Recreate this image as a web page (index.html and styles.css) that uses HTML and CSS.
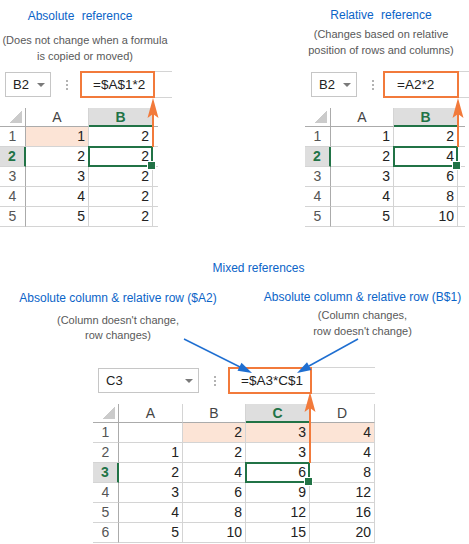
FILE: index.html
```html
<!DOCTYPE html>
<html lang="en">
<head>
    <meta charset="UTF-8">
    <title>Absolute, relative and mixed references</title>
    <link rel="stylesheet" href="styles.css">
</head>
<body>
<div class="page">
    <section class="top">
        <div class="panel panel-abs">
            <div class="caption">
                <h2 class="title">Absolute reference</h2>
                <p class="note">(Does not change when a formula<br>is copied or moved)</p>
            </div>
            <div class="sheet">
                <div class="bar">
                    <div class="namebox">B2<span class="caret"></span></div>
                    <div class="dots"></div>
                    <div class="fbar"><div class="formula">=$A$1*2</div></div>
                </div>
                <div class="grid grid-abs">
                    <div class="corner"></div><div class="ch">A</div><div class="ch sel-col">B</div><div class="ch x"></div>
                    <div class="rh">1</div><div class="c peach">1</div><div class="c">2</div><div class="x"></div>
                    <div class="rh sel-row">2</div><div class="c">2</div><div class="c active">2</div><div class="x"></div>
                    <div class="rh">3</div><div class="c">3</div><div class="c">2</div><div class="x"></div>
                    <div class="rh">4</div><div class="c">4</div><div class="c">2</div><div class="x"></div>
                    <div class="rh">5</div><div class="c">5</div><div class="c">2</div><div class="x"></div>
                </div>
            </div>
        </div>

        <div class="panel panel-rel">
            <div class="caption">
                <h2 class="title">Relative reference</h2>
                <p class="note">(Changes based on relative<br>position of rows and columns)</p>
            </div>
            <div class="sheet">
                <div class="bar">
                    <div class="namebox">B2<span class="caret"></span></div>
                    <div class="dots"></div>
                    <div class="fbar"><div class="formula">=A2*2</div></div>
                </div>
                <div class="grid grid-rel">
                    <div class="corner"></div><div class="ch">A</div><div class="ch sel-col">B</div><div class="ch x"></div>
                    <div class="rh">1</div><div class="c">1</div><div class="c">2</div><div class="x"></div>
                    <div class="rh sel-row">2</div><div class="c">2</div><div class="c active">4</div><div class="x"></div>
                    <div class="rh">3</div><div class="c">3</div><div class="c">6</div><div class="x"></div>
                    <div class="rh">4</div><div class="c">4</div><div class="c">8</div><div class="x"></div>
                    <div class="rh">5</div><div class="c">5</div><div class="c">10</div><div class="x"></div>
                </div>
            </div>
        </div>
    </section>

    <section class="mixed">
        <h2 class="title mixed-title">Mixed references</h2>
        <div class="mixed-notes">
            <div class="mcap mcap-left">
                <h3 class="title">Absolute column &amp; relative row ($A2)</h3>
                <p class="note">(Column doesn't change,<br>row changes)</p>
            </div>
            <div class="mcap mcap-right">
                <h3 class="title">Absolute column &amp; relative row (B$1)</h3>
                <p class="note">(Column changes,<br>row doesn't change)</p>
            </div>
        </div>
        <div class="sheet sheet-mixed">
            <div class="bar">
                <div class="namebox">C3<span class="caret"></span></div>
                <div class="dots"></div>
                <div class="fbar"><div class="formula">=$A3*C$1</div></div>
            </div>
            <div class="grid grid-mixed">
                <div class="corner"></div><div class="ch">A</div><div class="ch">B</div><div class="ch sel-col">C</div><div class="ch">D</div>
                <div class="rh">1</div><div class="c"></div><div class="c peach">2</div><div class="c peach">3</div><div class="c peach">4</div>
                <div class="rh">2</div><div class="c">1</div><div class="c">2</div><div class="c">3</div><div class="c">4</div>
                <div class="rh sel-row">3</div><div class="c">2</div><div class="c">4</div><div class="c active">6</div><div class="c">8</div>
                <div class="rh">4</div><div class="c">3</div><div class="c">6</div><div class="c">9</div><div class="c">12</div>
                <div class="rh">5</div><div class="c">4</div><div class="c">8</div><div class="c">12</div><div class="c">16</div>
                <div class="rh">6</div><div class="c">5</div><div class="c">10</div><div class="c">15</div><div class="c">20</div>
            </div>
        </div>
    </section>

    <!-- callout arrows drawn over the sheets -->
    <svg class="arrows" width="469" height="544" viewBox="0 0 469 544">
        <g stroke="#f27a3b" stroke-width="2">
            <line x1="153" y1="147" x2="153" y2="112"/>
            <line x1="458" y1="147" x2="458" y2="112"/>
            <line x1="310" y1="463" x2="310" y2="406"/>
        </g>
        <g fill="#f27a3b">
            <polygon points="153,98 158.5,118 153,114 147.5,118"/>
            <polygon points="458,98 463.5,118 458,114 452.5,118"/>
            <polygon points="310,392 315.5,412 310,408 304.5,412"/>
        </g>
        <g stroke="#1f6fd1" stroke-width="1.5">
            <line x1="184" y1="339" x2="240" y2="367"/>
            <line x1="358" y1="339" x2="309" y2="366"/>
        </g>
        <g fill="#1f6fd1">
            <polygon points="252,373 237.5,370.7 241.5,362.7"/>
            <polygon points="297,373 307,362.3 311.4,370.1"/>
        </g>
    </svg>
</div>
</body>
</html>
```

FILE: styles.css
```css
* {
    box-sizing: border-box;
}
body {
    margin: 0;
    font-family: "Liberation Sans", Arial, sans-serif;
    background: #fff;
}
.page {
    position: relative;
    width: 469px;
    height: 544px;
    overflow: hidden;
}

/* captions */
.title {
    margin: 0;
    font-size: 12px;
    font-weight: normal;
    line-height: 16px;
    color: #0b64c8;
    white-space: nowrap;
}
.note {
    margin: 0;
    font-size: 11px;
    line-height: 16px;
    color: #595959;
    white-space: nowrap;
}

/* top row: absolute + relative */
.top {
    display: flex;
    justify-content: space-between;
    height: 227px;
}
.panel-abs {
    width: 172px;
}
.panel-rel {
    width: 164px;
}
.caption {
    height: 71px;
    text-align: center;
}
.caption .title {
    word-spacing: 4px;
}
.panel-abs .caption {
    width: 170px;
    padding-top: 8px;
}
.panel-abs .title {
    padding-right: 10px;
}
.panel-abs .note {
    margin-top: 8px;
}
.panel-rel .caption {
    width: 152px;
    padding-top: 7px;
}
.panel-rel .note {
    margin-top: 3px;
}

/* formula bar */
.bar {
    display: flex;
    align-items: center;
    height: 27px;
    padding-left: 5px;
    color: #222;
}
.namebox {
    display: flex;
    align-items: center;
    justify-content: space-between;
    width: 46px;
    height: 25px;
    padding: 0 5px 0 7px;
    border: 1px solid #c6c6c6;
    font-size: 13px;
}
.caret {
    border-left: 4px solid transparent;
    border-right: 4px solid transparent;
    border-top: 4px solid #7a7a7a;
}
.dots {
    width: 2px;
    height: 10px;
    margin: 0 12px 0 15px;
    background: repeating-linear-gradient(#b3b3b3 0 2px, transparent 2px 4px);
}
.fbar {
    flex: 1;
    display: flex;
    height: 27px;
    border-top: 1px solid #d4d4d4;
    border-bottom: 1px solid #d4d4d4;
}
.formula {
    width: 75px;
    height: 27px;
    margin: -1px 0;
    padding-left: 11px;
    border: 2px solid #f27a3b;
    font-size: 13.5px;
    line-height: 23px;
}
.panel-rel .bar {
    padding-left: 6px;
}
.panel-rel .dots {
    margin-right: 9px;
}
.panel-rel .formula {
    width: 76px;
    padding-left: 12px;
}

/* grids */
.grid {
    display: grid;
    margin-top: 10px;
    font-size: 14px;
    color: #222;
}
.grid > div {
    border-right: 1px solid #d4d4d4;
    border-bottom: 1px solid #d4d4d4;
}
.grid-abs {
    width: 158px;
    grid-template-columns: 26px 63px 64px 5px;
    grid-template-rows: 19px repeat(5, 20px);
}
.grid-rel {
    width: 160px;
    grid-template-columns: 26px 63px 64px 7px;
    grid-template-rows: 19px repeat(5, 20px);
}
.grid-mixed {
    width: 282px;
    grid-template-columns: 26px 64px 63px 64px 65px;
    grid-template-rows: 19px repeat(6, 20px);
}
.grid .corner {
    border-right-color: #ababab;
    border-bottom-color: #ababab;
    background: linear-gradient(135deg, transparent 50%, #cbcbcb 50%) no-repeat right 3px bottom 3px / 13px 12px;
}
.grid .ch {
    text-align: center;
    line-height: 18px;
    color: #444;
    border-bottom-color: #ababab;
}
.grid .rh {
    text-align: center;
    line-height: 19px;
    color: #555;
    border-right-color: #ababab;
}
.grid .x {
    border-right: none;
}
.c {
    text-align: right;
    padding-right: 3px;
    line-height: 19px;
}
.peach {
    background: #fce4d6;
}
.grid .sel-col {
    background: #dedede;
    color: #217346;
    font-weight: bold;
    border-bottom: 2px solid #217346;
}
.grid .sel-row {
    background: #dedede;
    color: #217346;
    font-weight: bold;
    border-right: 2px solid #217346;
}
.active {
    position: relative;
}
.active::after {
    content: "";
    position: absolute;
    left: -1px;
    top: -1px;
    right: -1px;
    bottom: -1px;
    border: 2px solid #217346;
}
.active::before {
    content: "";
    position: absolute;
    right: -4px;
    bottom: -4px;
    width: 7px;
    height: 7px;
    background: #217346;
    border: 1px solid #fff;
    z-index: 1;
}

/* mixed references */
.mixed {
    height: 317px;
}
.mixed-title {
    margin-top: 33px;
    padding-left: 48px;
    text-align: center;
}
.mixed-notes {
    display: flex;
    height: 91px;
    text-align: center;
}
.mcap-left {
    width: 236px;
    padding-top: 14px;
}
.mcap-left .note {
    margin-top: 7px;
    line-height: 15px;
}
.mcap-right {
    width: 233px;
    padding: 13px 0 0 20px;
}
.mcap-right .note {
    margin-top: 2px;
}
.sheet-mixed {
    width: 282px;
    margin-left: 93px;
}
.sheet-mixed .namebox {
    width: 101px;
}
.sheet-mixed .formula {
    width: 84px;
    padding-left: 11px;
}

.arrows {
    position: absolute;
    left: 0;
    top: 0;
    pointer-events: none;
}
```
